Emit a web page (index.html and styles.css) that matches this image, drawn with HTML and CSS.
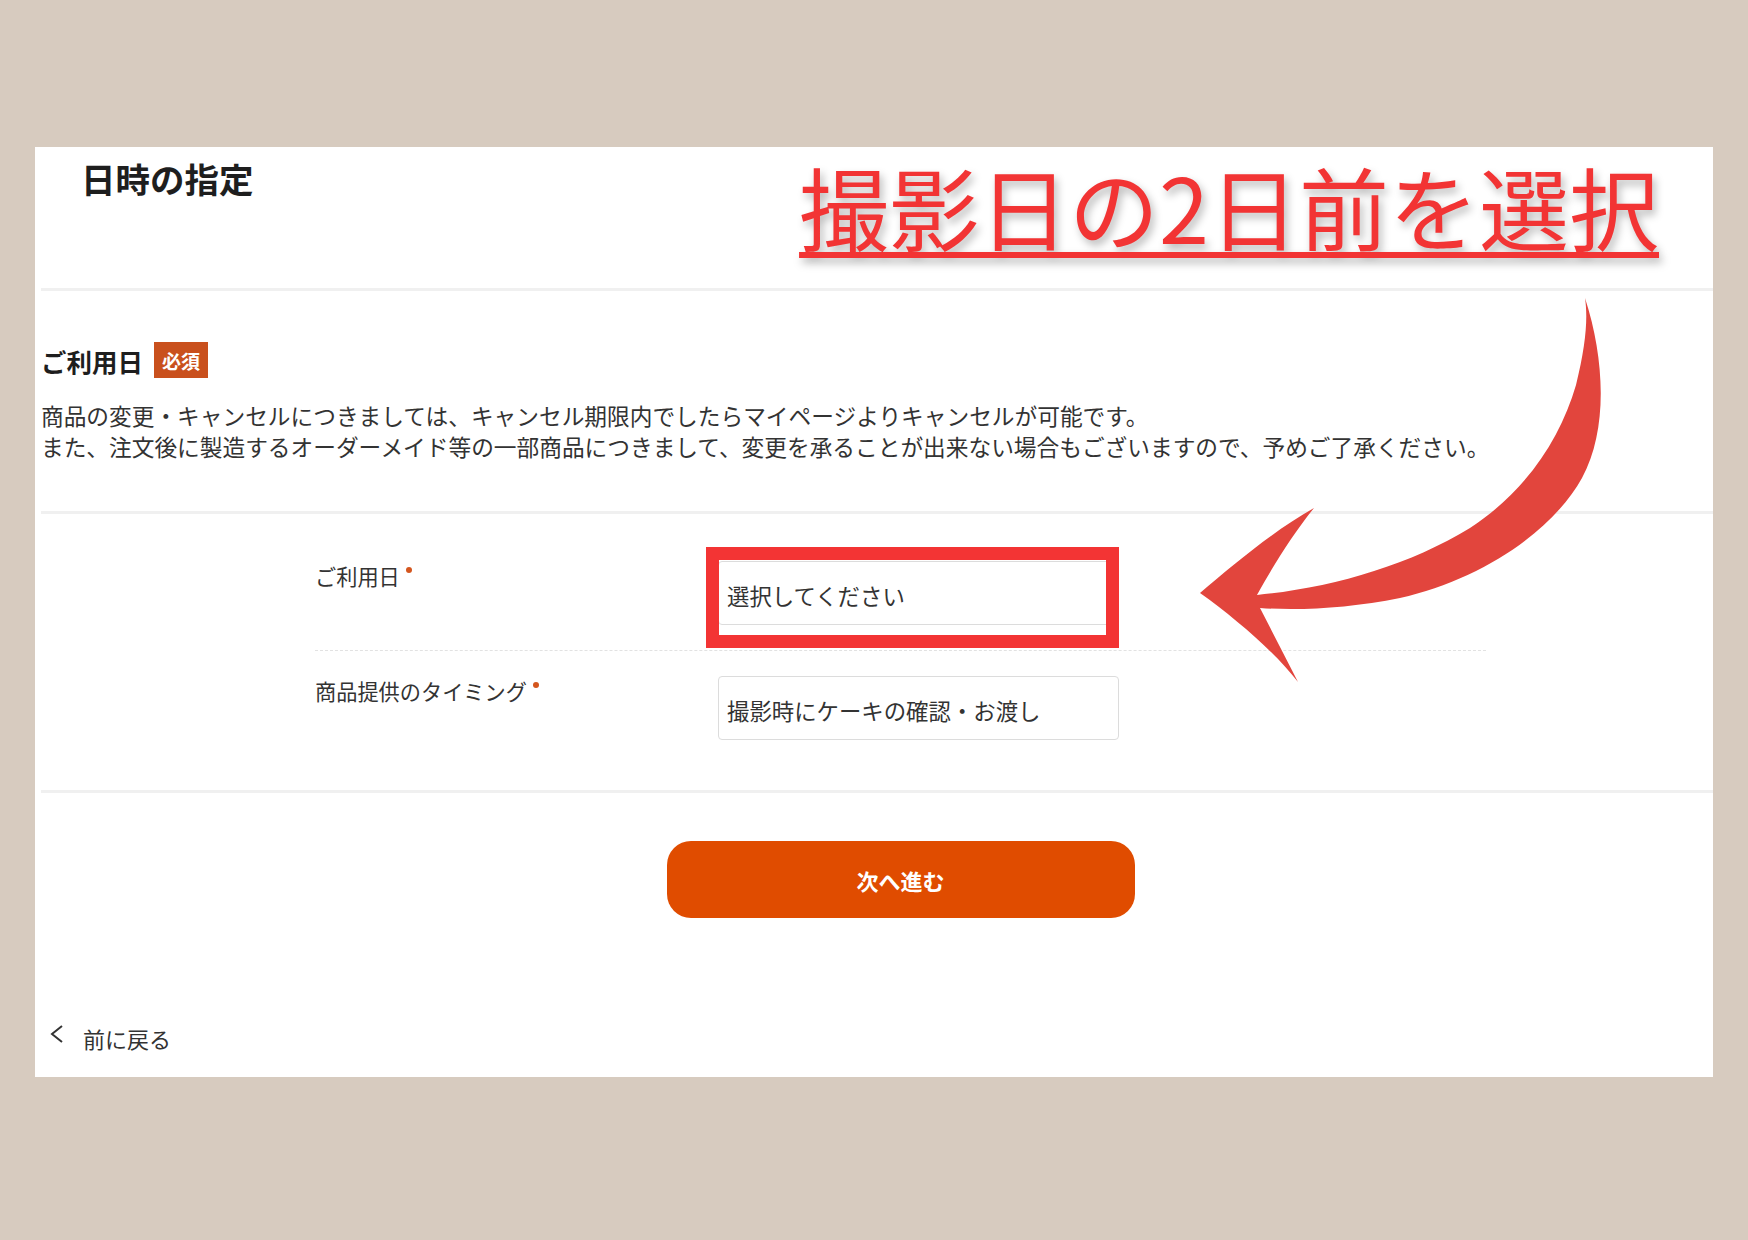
FILE: index.html
```html
<!DOCTYPE html>
<html lang="ja">
<head>
<meta charset="utf-8">
<title>日時の指定</title>
<link rel="stylesheet" href="styles.css">
</head>
<body>
<main class="panel">
  <header class="panel-head">
    <h1 class="title">日時の指定</h1>
    <p class="callout">撮影日の2日前を選択</p>
  </header>

  <section class="notice">
    <h2 class="notice-title">ご利用日<span class="badge">必須</span></h2>
    <p class="notice-text">商品の変更・キャンセルにつきましては、キャンセル期限内でしたらマイページよりキャンセルが可能です。<br>また、注文後に製造するオーダーメイド等の一部商品につきまして、変更を承ることが出来ない場合もございますので、予めご了承ください。</p>
  </section>

  <section class="form-section">
    <div class="form">
      <div class="form-row">
        <div class="form-label">ご利用日<span class="req"></span></div>
        <div class="field">
          <div class="input">選択してください</div>
          <span class="mark"></span>
        </div>
      </div>
      <div class="form-row">
        <div class="form-label">商品提供のタイミング<span class="req"></span></div>
        <div class="field">
          <div class="input">撮影時にケーキの確認・お渡し</div>
        </div>
      </div>
    </div>
  </section>

  <div class="actions">
    <button class="next" type="button">次へ進む</button>
  </div>

  <a class="back" href="#">
    <svg class="back-icon" width="14" height="18" viewBox="0 0 14 18"><polyline points="12,1 2,9 12,17" fill="none" stroke="#333" stroke-width="2"/></svg>
    <span>前に戻る</span>
  </a>

  <svg class="arrow" width="440" height="420" viewBox="0 0 440 420">
    <path d="M405,18 C425,80 428,150 402,198 C372,252 300,300 220,318 C170,328 120,331 80,328 L118,402 C95,372 55,338 20,313 C55,283 95,250 134,228 C112,255 92,288 77,315 C150,308 228,286 290,248 C345,212 380,160 396,105 C406,65 408,38 405,18 Z" fill="#e2453d"/>
  </svg>
</main>
</body>
</html>
```

FILE: styles.css
```css
* { box-sizing: border-box; }

html, body {
  margin: 0;
  padding: 0;
}

body {
  background: #d7cbbf;
  font-family: "Noto Sans CJK JP", "Noto Sans", sans-serif;
  color: #333;
  width: 1748px;
  height: 1240px;
  overflow: hidden;
}

.panel {
  position: relative;
  margin: 147px 35px 0;
  background: #fff;
  padding: 0 0 24px 6px;
}

.panel-head {
  display: flex;
  justify-content: space-between;
  align-items: flex-start;
  height: 144px;
  padding: 8px 54px 0 40px;
  border-bottom: 3px solid #f0f0f0;
}

.title {
  margin: 3px 0 0;
  font-size: 34.5px;
  line-height: 40px;
  font-weight: 700;
  color: #1e1e1e;
}

.callout {
  margin: 0;
  font-size: 90px;
  line-height: 100px;
  font-weight: 400;
  color: #f23434;
  text-decoration: underline;
  text-decoration-thickness: 6px;
  text-underline-offset: 8px;
  text-shadow: 3px 5px 8px rgba(0, 0, 0, 0.28);
}

.notice {
  padding: 51px 0 49px;
  border-bottom: 3px solid #f0f0f0;
}

.notice-title {
  display: flex;
  align-items: center;
  gap: 11px;
  height: 36px;
  margin: 0;
  font-size: 25.5px;
  font-weight: 700;
  color: #1e1e1e;
}

.badge {
  display: flex;
  align-items: center;
  justify-content: center;
  width: 54px;
  height: 36px;
  background: #c9501d;
  color: #fff;
  font-size: 19px;
  font-weight: 700;
}

.notice-text {
  margin: 22px 0 0;
  font-size: 22.7px;
  line-height: 31px;
  color: #333;
}

.form-section {
  padding: 22px 0 25px;
  border-bottom: 3px solid #f0f0f0;
}

.form {
  margin-left: 274px;
  width: 1171px;
}

.form-row {
  display: grid;
  grid-template-columns: 403px 401px;
  padding: 25px 0;
}

.form-row + .form-row {
  border-top: 1px dashed #e2e2e2;
}

.form-label {
  font-size: 21.2px;
  line-height: 30px;
  color: #333;
}

.req {
  display: inline-block;
  width: 6px;
  height: 6px;
  margin-left: 6px;
  border-radius: 50%;
  background: #d4561e;
  vertical-align: 12px;
}

.field {
  position: relative;
}

.input {
  display: flex;
  align-items: center;
  height: 64px;
  padding: 4px 8px 0;
  border: 1px solid #dcdcdc;
  border-radius: 4px;
  font-size: 22.4px;
  color: #333;
  background: #fff;
}

.mark {
  position: absolute;
  left: -12px;
  top: -14px;
  width: 413px;
  height: 101px;
  border: 13px solid #f33434;
}

.actions {
  margin-left: 274px;
  width: 1171px;
  padding-top: 48px;
  display: flex;
  justify-content: center;
}

.next {
  width: 468px;
  height: 77px;
  border: none;
  border-radius: 24px;
  background: #e04c00;
  color: #fff;
  font-family: "Noto Sans CJK JP", "Noto Sans", sans-serif;
  font-size: 22px;
  font-weight: 700;
}

.back {
  display: flex;
  align-items: center;
  gap: 19px;
  margin-top: 105px;
  padding-left: 9px;
  height: 30px;
  font-size: 22px;
  line-height: 30px;
  color: #333;
  text-decoration: none;
}

.back-icon {
  margin-bottom: 8px;
}

.arrow {
  position: absolute;
  left: 1145px;
  top: 133px;
  pointer-events: none;
}
```
